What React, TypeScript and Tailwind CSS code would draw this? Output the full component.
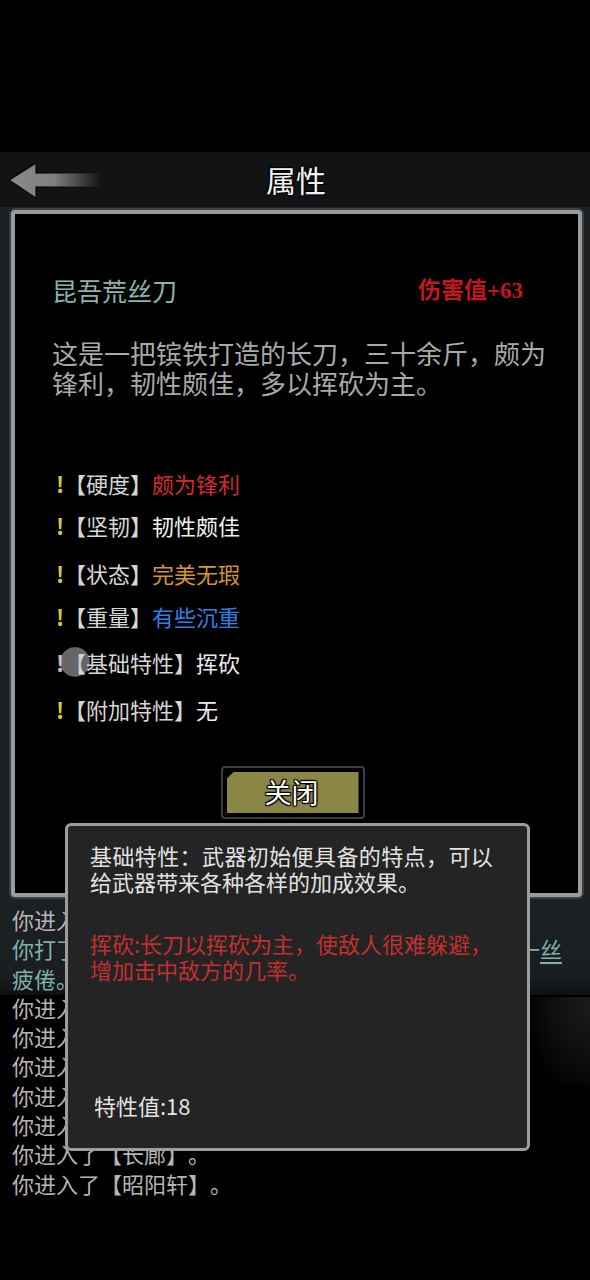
import React from "react";

const CJK = "font-['Noto_Sans_CJK_SC','Noto_Sans',sans-serif]";

function BackArrow() {
  return (
    <svg width="96" height="40" viewBox="0 0 96 40" className="block">
      <defs>
        <linearGradient id="ag" x1="0" y1="0" x2="1" y2="0">
          <stop offset="0" stopColor="#8c8c8c" />
          <stop offset="0.5" stopColor="#7e7e7e" />
          <stop offset="1" stopColor="#7e7e7e" stopOpacity="0" />
        </linearGradient>
        <linearGradient id="as" x1="0" y1="0" x2="1" y2="0">
          <stop offset="0" stopColor="#000" stopOpacity="0.9" />
          <stop offset="0.6" stopColor="#000" stopOpacity="0.6" />
          <stop offset="1" stopColor="#000" stopOpacity="0" />
        </linearGradient>
      </defs>
      <polygon
        points="2,19 29,2 29,12 94,12 94,26 29,26 29,37"
        fill="url(#ag)"
        stroke="url(#as)"
        strokeWidth="1.5"
        strokeLinejoin="round"
      />
    </svg>
  );
}

function AttrRow({
  label,
  value,
  color,
  mt,
  touch,
}: {
  label: string;
  value: string;
  color: string;
  mt: string;
  touch?: boolean;
}) {
  return (
    <div className={`relative flex items-center h-[30px] text-[22px] leading-[30px] ${mt}`}>
      <span className={`w-[8px] font-bold ${touch ? "text-[#bdbdbd]" : "text-[#cfcf34]"}`}>!</span>
      <span className="text-[#d6d6d6] [text-shadow:0_0_3px_#000,0_0_1px_#000]">{label}</span>
      <span className={color}>{value}</span>
      {touch && (
        <span className="absolute left-[4px] top-[0px] w-[30px] h-[30px] rounded-full bg-[radial-gradient(circle,rgba(190,190,190,0.55)_0%,rgba(200,200,200,0.5)_50%,rgba(235,235,235,0.45)_66%,rgba(200,200,200,0)_78%)]" />
      )}
    </div>
  );
}

export default function App() {
  const logLines: { t: React.ReactNode; c: string }[] = [
    { t: "你进入了【御花园】。", c: "text-[#b5b5b5]" },
    {
      t: (
        <>
          你打了个哈欠，连日奔波之下，你的身体终于感到了一<span className="underline underline-offset-4">丝</span>
        </>
      ),
      c: "text-[#7fb0a9]",
    },
    { t: "疲倦。", c: "text-[#7fb0a9]" },
    { t: "你进入了【御花园】。", c: "text-[#b5b5b5]" },
    { t: "你进入了【长廊】。", c: "text-[#b5b5b5]" },
    { t: "你进入了【御花园】。", c: "text-[#b5b5b5]" },
    { t: "你进入了【长廊】。", c: "text-[#b5b5b5]" },
    { t: "你进入了【御花园】。", c: "text-[#b5b5b5]" },
    { t: "你进入了【长廊】。", c: "text-[#b5b5b5]" },
    { t: "你进入了【昭阳轩】。", c: "text-[#b5b5b5]" },
  ];

  return (
    <div className={`relative w-[590px] h-[1280px] overflow-hidden bg-black ${CJK} [text-spacing-trim:space-all]`}>
      {/* top empty */}
      <div className="h-[152px] bg-black" />

      {/* header */}
      <div className="relative h-[55px] bg-[#121315] flex items-center justify-center">
        <div className="absolute left-[7px] top-[9px]">
          <BackArrow />
        </div>
        <span className="text-[30px] leading-none text-[#f2f2f2] [text-shadow:0_0_2px_#000,1px_1px_1px_#000,-1px_-1px_1px_#000] pl-[2px] pb-[2px]">
          属性
        </span>
      </div>

      {/* panel section */}
      <div className="bg-[#1c2023] pt-[3px] pb-[8px]">
        <div className="ml-[11px] w-[571px] h-[687px] rounded-[4px] border-[4px] border-[#9b9b9b] bg-black shadow-[0_0_0_2px_#3c3f41] flex flex-col">
          <div className="pl-[37px] pr-[55px] pt-[61px] flex items-center justify-between h-[30px] box-content">
            <span className="text-[25px] leading-[30px] text-[#8cb3ad]">昆吾荒丝刀</span>
            <span className="text-[23px] leading-[30px] font-bold text-[#c4161c] font-['Liberation_Serif','Noto_Sans_CJK_SC',serif] pt-[2px]">
              伤害值+63
            </span>
          </div>
          <div className="pl-[37px] mt-[33px] text-[26px] leading-[30px] text-[#a9a9a9]">
            <div className="whitespace-nowrap">这是一把镔铁打造的长刀，三十余斤，颇为</div>
            <div className="whitespace-nowrap">锋利，韧性颇佳，多以挥砍为主。</div>
          </div>
          <div className="pl-[41px] mt-[70px] flex flex-col">
            <AttrRow label="【硬度】" value="颇为锋利" color="text-[#d42a2a]" mt="mt-0" />
            <AttrRow label="【坚韧】" value="韧性颇佳" color="text-[#f2f2f2]" mt="mt-[12px]" />
            <AttrRow label="【状态】" value="完美无瑕" color="text-[#d6962c]" mt="mt-[18px]" />
            <AttrRow label="【重量】" value="有些沉重" color="text-[#2f80e4]" mt="mt-[13px]" />
            <AttrRow label="【基础特性】" value="挥砍" color="text-[#ececec]" mt="mt-[16px]" touch />
            <AttrRow label="【附加特性】" value="无" color="text-[#ececec]" mt="mt-[17px]" />
          </div>
          <div className="mt-[42px] flex justify-center pr-[8px]">
            <div className="w-[144px] h-[53px] rounded-[4px] border-[2px] border-[#3e3e3e] bg-black p-[4px]">
              <div className="relative w-full h-full bg-[#8a8746] [clip-path:polygon(7px_0,100%_0,100%_100%,0_100%,0_7px)] flex items-center justify-center">
                <span className="text-[27px] leading-none text-white [text-shadow:0_0_2px_#000,1px_1px_1px_#000,-1px_-1px_1px_#000,1px_-1px_1px_#000,-1px_1px_1px_#000] pr-[2px] pb-[2px]">
                  关闭
                </span>
              </div>
            </div>
          </div>
        </div>
      </div>

      {/* log area */}
      <div className="relative">
        <div className="absolute left-0 right-0 top-0 h-[90px] bg-[linear-gradient(180deg,#1b2023_0%,#1a1e21_80%,#0d0f10_100%)]" />
        <div className="absolute right-0 top-[92px] w-[60px] h-[90px] bg-[radial-gradient(ellipse_at_top_right,#1c1c1c_0%,#0d0d0d_50%,rgba(0,0,0,0)_80%)]" />
        <div className="relative pl-[12px] text-[22px] leading-[29.3px]">
          {logLines.map((l, i) => (
            <div key={i} className={`whitespace-nowrap ${l.c}`}>
              {l.t}
            </div>
          ))}
        </div>
      </div>

      {/* tooltip overlay */}
      <div className="absolute left-[65px] top-[823px] w-[465px] h-[328px] rounded-[6px] border-[3px] border-[#9d9d9d] bg-[#242424] flex flex-col text-[22px] leading-[26px]">
        <div className="pl-[22px] pt-[16px] text-[#e2e2e2]">
          <div className="whitespace-nowrap tracking-[0.4px]">基础特性：武器初始便具备的特点，可以</div>
          <div className="whitespace-nowrap">给武器带来各种各样的加成效果。</div>
        </div>
        <div className="pl-[22px] mt-[36px] text-[#c2302f]">
          <div className="whitespace-nowrap">挥砍:长刀以挥砍为主，使敌人很难躲避，</div>
          <div className="whitespace-nowrap">增加击中敌方的几率。</div>
        </div>
        <div className="pl-[26px] mt-[110px] text-[#e2e2e2]">特性值:18</div>
      </div>
    </div>
  );
}
